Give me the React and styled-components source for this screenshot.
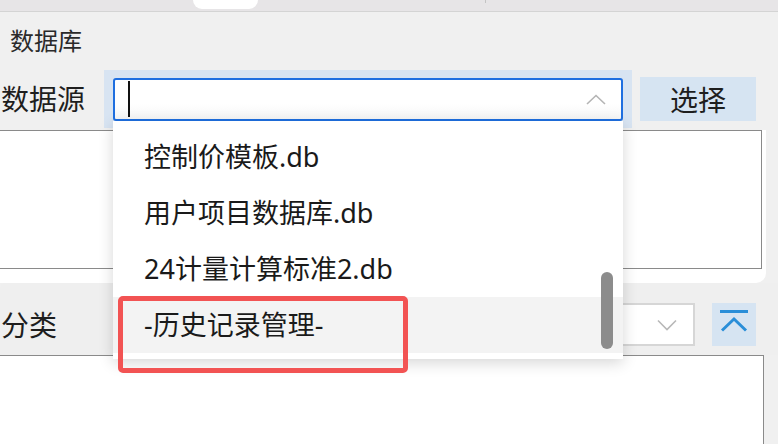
import React from 'react';
import styled, { createGlobalStyle } from 'styled-components';

const GlobalStyle = createGlobalStyle`
  html, body {
    margin: 0;
    padding: 0;
    background: #f0f0f0;
  }
  * {
    box-sizing: border-box;
  }
`;

const sources = ['控制价模板.db', '用户项目数据库.db', '24计量计算标准2.db', '-历史记录管理-'];

const App = () => {
  return (
    <Page>
      <GlobalStyle />
      <TabStrip>
        <ActiveTab />
        <TabTick />
      </TabStrip>

      <SectionTitle>数据库</SectionTitle>

      <FieldRow>
        <FieldLabel>数据源</FieldLabel>
        <ComboHalo>
          <ComboBox $focused>
            <Caret />
            <svg width="20" height="11" viewBox="0 0 20 11">
              <path d="M1 10 L10 1.5 L19 10" fill="none" stroke="#b4b4b4" strokeWidth="1.6" />
            </svg>
          </ComboBox>

          {/* 下拉列表 */}
          <Popup>
            {sources.map((name, i) => (
              <PopupItem key={name} $active={i === sources.length - 1}>
                {name}
              </PopupItem>
            ))}
            <ScrollThumb />
          </Popup>
          <Highlight />
        </ComboHalo>
        <ActionButton>选择</ActionButton>
      </FieldRow>

      <ListCard>
        <ListBox $height={139} />
      </ListCard>

      <CategoryRow>
        <FieldLabel>分类</FieldLabel>
        <SmallCombo>
          <svg width="20" height="12" viewBox="0 0 20 12">
            <path d="M1 1.5 L10 10.5 L19 1.5" fill="none" stroke="#b8b8b8" strokeWidth="1.6" />
          </svg>
        </SmallCombo>
        <IconButton>
          <svg width="28" height="22" viewBox="0 0 28 22">
            <path d="M0 1.5 H28" stroke="#2a8ed8" strokeWidth="3" />
            <path d="M2 20.5 L14 9 L26 20.5" fill="none" stroke="#2a8ed8" strokeWidth="3" />
          </svg>
        </IconButton>
      </CategoryRow>

      <ListBox $height={100} />
    </Page>
  );
};

export default App;

const Page = styled.div`
  width: 778px;
  height: 444px;
  overflow: hidden;
  background: #f0f0f0;
  font-family: 'Noto Sans', 'Noto Sans CJK SC', sans-serif;
  color: #1e1e1e;
`;

const TabStrip = styled.div`
  position: relative;
  height: 12px;
  background: #e7e5e7;
  border-bottom: 1px solid #d4d4d4;
`;

const ActiveTab = styled.div`
  margin-left: 193px;
  width: 65px;
  height: 9px;
  background: #ffffff;
  border-radius: 0 0 9px 9px;
`;

const TabTick = styled.div`
  position: absolute;
  left: 485px;
  top: 0;
  width: 1px;
  height: 3px;
  background: #c4c4c4;
`;

const SectionTitle = styled.div`
  margin-top: 16px;
  padding-left: 10px;
  height: 25px;
  font-size: 24px;
  line-height: 25px;
  color: #2a2a2a;
`;

const FieldRow = styled.div`
  display: flex;
  align-items: center;
  margin-top: 17px;
`;

const FieldLabel = styled.div`
  width: 104px;
  padding-left: 1px;
  font-size: 28px;
  line-height: 40px;
  color: #1e1e1e;
`;

const ComboHalo = styled.div`
  position: relative;
  width: 528px;
  height: 58px;
  padding: 8px 9px 7px;
  background: #d8e4f2;
`;

const ComboBox = styled.div`
  position: relative;
  display: flex;
  align-items: center;
  justify-content: flex-end;
  height: 43px;
  padding-right: 15px;
  border: 2px solid ${(p) => (p.$focused ? '#1f6fe0' : '#d4d4d4')};
  border-radius: 3px;
  background: linear-gradient(#ffffff 60%, #f6f6f6);
`;

const Caret = styled.span`
  position: absolute;
  left: 13px;
  top: 1px;
  width: 2px;
  height: 36px;
  background: #111;
`;

const Popup = styled.div`
  position: absolute;
  left: 9px;
  top: 51px;
  width: 510px;
  height: 238px;
  padding: 8px 0 6px;
  background: #ffffff;
  box-shadow: 0 4px 14px rgba(0, 0, 0, 0.16);
  z-index: 2;
`;

const PopupItem = styled.div`
  height: 56px;
  padding-left: 31px;
  font-size: 27px;
  line-height: 56px;
  color: #1a1a1a;
  background: ${(p) => (p.$active ? '#f3f3f3' : 'transparent')};
  white-space: nowrap;
`;

const ScrollThumb = styled.div`
  position: absolute;
  right: 10px;
  top: 151px;
  width: 12px;
  height: 77px;
  border-radius: 6px;
  background: #8c8c8c;
`;

const Highlight = styled.div`
  position: absolute;
  left: 14px;
  top: 226px;
  width: 290px;
  height: 77px;
  border: 5px solid #f25353;
  border-radius: 5px;
  z-index: 3;
`;

const ActionButton = styled.div`
  display: flex;
  align-items: center;
  justify-content: center;
  margin-left: 8px;
  width: 116px;
  height: 44px;
  background: #d6e4f2;
  font-size: 28px;
  color: #1e1e1e;
`;

const ListCard = styled.div`
  margin-top: 2px;
  margin-left: -2px;
  width: 768px;
  padding-bottom: 14px;
  background: #ffffff;
  border-bottom-right-radius: 10px;
`;

const ListBox = styled.div`
  margin-left: -2px;
  width: 766px;
  height: ${(p) => p.$height}px;
  background: #ffffff;
  border: 1px solid #8a8a8a;
`;

const CategoryRow = styled.div`
  display: flex;
  align-items: center;
  height: 72px;
  padding: 20px 0 9px;
  background: #efefef;
  border-top-left-radius: 6px;
`;

const SmallCombo = styled.div`
  display: flex;
  align-items: center;
  justify-content: flex-end;
  margin-left: 9px;
  width: 582px;
  height: 43px;
  padding-right: 16px;
  background: #ffffff;
  border: 2px solid #d6d6d6;
`;

const IconButton = styled.div`
  display: flex;
  justify-content: center;
  align-items: flex-start;
  margin-left: 17px;
  width: 44px;
  height: 43px;
  padding-top: 7px;
  background: #d6e4f2;
`;
